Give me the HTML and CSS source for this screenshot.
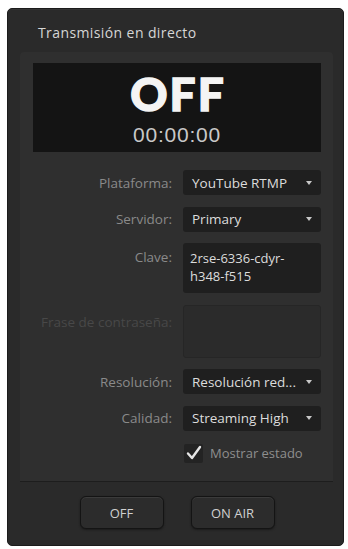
FILE: index.html
```html
<!DOCTYPE html>
<html lang="es">
<head>
    <meta charset="UTF-8">
    <meta name="viewport" content="width=device-width, initial-scale=1.0">
    <title>Transmisión en directo</title>
    <link rel="stylesheet" href="styles.css">
</head>
<body>
    <div class="panel">
        <div class="titulo">Transmisión en directo</div>

        <div class="seccion">
            <div class="pantalla">
                <div class="estado">OFF</div>
                <div class="tiempo">00:00:00</div>
            </div>

            <div class="formulario">
                <div class="etiqueta">Plataforma:</div>
                <div class="selector">YouTube RTMP <span class="flecha"></span></div>

                <div class="etiqueta">Servidor:</div>
                <div class="selector">Primary <span class="flecha"></span></div>

                <div class="etiqueta arriba">Clave:</div>
                <div class="campo clave">2rse-6336-cdyr-<br>h348-f515</div>

                <div class="etiqueta arriba apagada">Frase de contraseña:</div>
                <div class="campo frase"></div>

                <div class="etiqueta">Resolución:</div>
                <div class="selector">Resolución red... <span class="flecha"></span></div>

                <div class="etiqueta">Calidad:</div>
                <div class="selector">Streaming High <span class="flecha"></span></div>

                <div></div>
                <div class="casilla">
                    <span class="marca">
                        <svg width="18" height="18" viewBox="0 0 18 18">
                            <path d="M3 9.5 L7 14 L15 3" fill="none" stroke="#e6e6e6" stroke-width="2.4" stroke-linecap="round" stroke-linejoin="round"/>
                        </svg>
                    </span>
                    Mostrar estado
                </div>
            </div>
        </div>

        <div class="botones">
            <button class="boton">OFF</button>
            <button class="boton">ON AIR</button>
        </div>
    </div>
</body>
</html>
```

FILE: styles.css
```css
*
{
    box-sizing: border-box;
    font-family: "Open Sans", "Noto Sans", sans-serif;
}

body
{
    margin: 0;
    background-color: white;
}

.panel
{
    margin: 8px 0 0 7px;
    width: 337px;
    height: 538px;
    background-color: #2a2a2a;
    border: 1px solid #1c1c1c;
    border-radius: 5px;
    box-shadow: inset 0 1px 0 #333;
}

.titulo
{
    height: 43px;
    padding: 14px 0 0 30px;
    font-size: 14px;
    letter-spacing: 0.4px;
    color: #d6d6d6;
}

.seccion
{
    margin: 0 10px 0 12px;
    padding: 11px 12px 0 13px;
    height: 430px;
    background-color: #2f2f2f;
    border-radius: 4px 4px 0 0;
    border-bottom: 1px solid #1d1d1d;
}

.pantalla
{
    height: 89px;
    padding-top: 7px;
    background-color: #141414;
    display: flex;
    flex-direction: column;
    align-items: center;
}

.estado
{
    font-family: Lato, "Open Sans", sans-serif;
    font-size: 46px;
    line-height: 48px;
    font-weight: 900;
    letter-spacing: 2px;
    padding-left: 2px;
    color: #f4f4f4;
    -webkit-text-stroke: 1.4px #f4f4f4;
}

.tiempo
{
    margin-top: 5.5px;
    font-family: "Liberation Sans", Arial, sans-serif;
    font-size: 21px;
    line-height: 22px;
    letter-spacing: 0.8px;
    color: #c8c8c8;
}

.formulario
{
    margin-top: 18px;
    display: grid;
    grid-template-columns: 1fr 138px;
    grid-template-rows: 25px 25px 50px 53px 25px 25px 22px;
    column-gap: 11px;
    row-gap: 11.5px;
}

.etiqueta
{
    display: flex;
    align-items: center;
    justify-content: flex-end;
    font-size: 13.5px;
    color: #8a8a8a;
}

.etiqueta.arriba
{
    align-items: flex-start;
    padding-top: 5px;
}

.etiqueta.apagada
{
    padding-top: 8px;
    color: #484848;
}

.selector
{
    display: flex;
    align-items: center;
    justify-content: space-between;
    padding: 0 9px 0 9px;
    background-color: #1f1f1f;
    border-radius: 3px;
    font-size: 13.5px;
    color: #dcdcdc;
}

.flecha
{
    width: 0;
    height: 0;
    border-left: 3px solid transparent;
    border-right: 3px solid transparent;
    border-top: 4px solid #c8c8c8;
}

.campo
{
    background-color: #1f1f1f;
    border-radius: 3px;
    padding: 6px 7px;
    font-size: 13px;
    line-height: 18px;
    color: #dcdcdc;
}

.campo.frase
{
    background-color: #2b2b2b;
    border: 1px solid #262626;
}

.casilla
{
    display: flex;
    align-items: center;
    gap: 7px;
    padding-left: 1px;
    font-size: 13px;
    color: #8e8e8e;
}

.marca
{
    width: 19px;
    height: 19px;
    background-color: #232323;
    border-radius: 2px;
    display: flex;
    align-items: center;
    justify-content: center;
}

.botones
{
    display: flex;
    justify-content: center;
    gap: 27px;
    padding: 14px 0 0 3px;
}

.boton
{
    width: 84px;
    height: 33px;
    background-color: #2c2c2c;
    border: 1px solid #141414;
    border-radius: 6px;
    box-shadow: inset 0 1px 0 #3b3b3b, 0 1px 2px #1a1a1a;
    font-size: 13px;
    color: #d0d0d0;
}
```
